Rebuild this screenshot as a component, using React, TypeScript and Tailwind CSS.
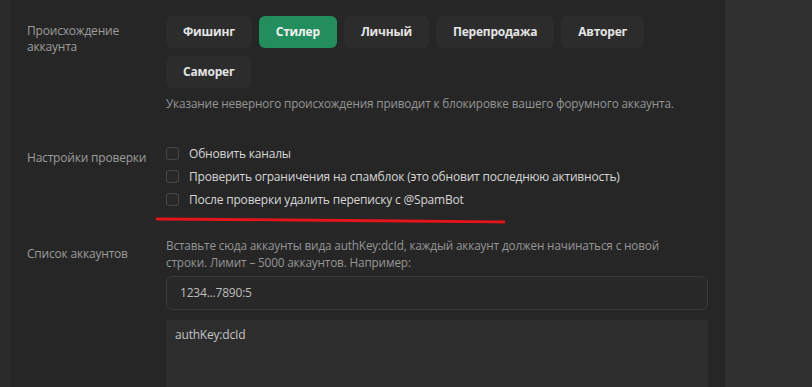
import React from "react";

const buttons = ["Фишинг", "Стилер", "Личный", "Перепродажа", "Авторег", "Саморег"];

function Checkbox({ label }: { label: string }) {
  return (
    <label className="flex items-center gap-[10px] h-[23px]">
      <span className="w-[13px] h-[13px] rounded-[3px] border border-[#474747] bg-[#282828] shrink-0" />
      <span className="text-[12px] tracking-[-0.2px] text-[#d6d6d6]">{label}</span>
    </label>
  );
}

export default function App() {
  return (
    <div
      className="flex w-[812px] h-[387px] overflow-hidden bg-[#303030]"
      style={{ fontFamily: '"Open Sans", "Noto Sans", sans-serif' }}
    >
      <div className="w-[10px] bg-[#2b2b2b] shrink-0" />
      <div className="relative w-[715px] shrink-0 bg-[#262626] pr-[17px]">
        {/* Row 1 */}
        <div className="grid grid-cols-[156px_1fr] pt-[16px]">
          <div className="pl-[17px] pt-[7px] text-[12px] tracking-[-0.2px] leading-[16px] text-[#9c9c9c]">
            Происхождение
            <br />
            аккаунта
          </div>
          <div>
            <div className="flex flex-wrap gap-x-[7px] gap-y-[8px]">
              {buttons.map((b) => (
                <div
                  key={b}
                  className={
                    "h-[32px] px-[17px] flex items-center rounded-[6px] text-[12px] tracking-[-0.2px] font-bold " +
                    (b === "Стилер"
                      ? "bg-[#228e5d] text-[#f2f2f2]"
                      : "bg-[#2c2c2c] text-[#e4e4e4]")
                  }
                >
                  {b}
                </div>
              ))}
            </div>
            <div className="mt-[7px] text-[11.75px] tracking-[-0.15px] leading-[17px] text-[#959595]">
              Указание неверного происхождения приводит к блокировке вашего форумного аккаунта.
            </div>
          </div>
        </div>

        {/* Row 2 */}
        <div className="grid grid-cols-[156px_1fr] mt-[30px]">
          <div className="pl-[17px] pt-[8px] text-[12px] tracking-[-0.2px] leading-[16px] text-[#9c9c9c]">
            Настройки проверки
          </div>
          <div className="flex flex-col">
            <Checkbox label="Обновить каналы" />
            <Checkbox label="Проверить ограничения на спамблок (это обновит последнюю активность)" />
            <Checkbox label="После проверки удалить переписку с @SpamBot" />
          </div>
        </div>

        {/* Row 3 */}
        <div className="grid grid-cols-[156px_1fr] mt-[26px]">
          <div className="pl-[17px] pt-[9px] text-[12px] tracking-[-0.2px] leading-[16px] text-[#9c9c9c]">
            Список аккаунтов
          </div>
          <div>
            <div className="text-[11.75px] tracking-[-0.15px] leading-[17px] text-[#959595]">
              Вставьте сюда аккаунты вида authKey:dcId, каждый аккаунт должен начинаться с новой
              <br />
              строки. Лимит – 5000 аккаунтов. Например:
            </div>
            <div className="mt-[5px] h-[34px] rounded-[6px] border border-[#3a3a3a] bg-[#282828] flex items-center pl-[13px] text-[12px] tracking-[-0.2px] text-[#bdbdbd]">
              1234...7890:5
            </div>
            <div className="mt-[10px] h-[80px] bg-[#2d2d2d] pl-[9px] pt-[6px] text-[12px] tracking-[-0.2px] text-[#c4c4c4]">
              authKey:dcId
            </div>
          </div>
        </div>

        {/* Red hand-drawn underline */}
        <svg
          className="absolute left-[145px] top-[213px] pointer-events-none"
          width="360"
          height="14"
          viewBox="0 0 360 14"
        >
          <path
            d="M2 6 C 80 6.4, 170 7.3, 250 8 S 330 8.8, 349 9"
            stroke="#e3141b"
            strokeWidth="2.8"
            fill="none"
            strokeLinecap="round"
          />
        </svg>
      </div>
      <div className="flex-1 bg-[#303030]" />
    </div>
  );
}
